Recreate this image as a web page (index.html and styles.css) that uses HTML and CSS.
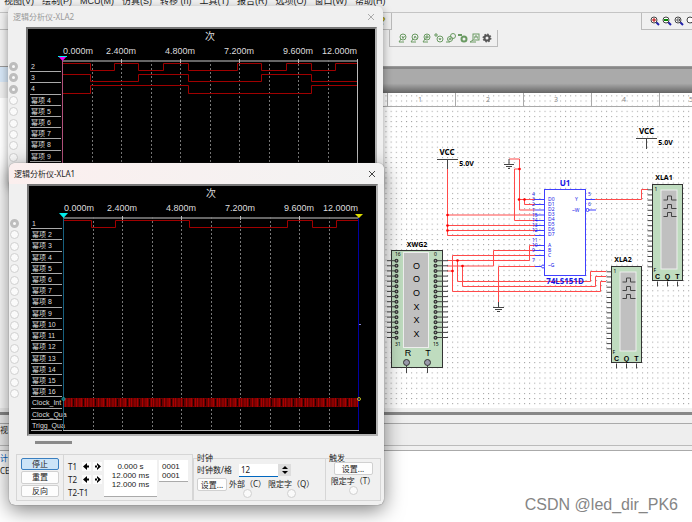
FILE: index.html
```html
<!DOCTYPE html>
<html lang="zh">
<head>
  <meta charset="UTF-8">
  <title>Multisim</title>
  <link rel="stylesheet" href="styles.css">
</head>
<body>
  <nav class="menubar">
    <a href="#">视图(V)</a>
    <a href="#">绘制(P)</a>
    <a href="#">MCU(M)</a>
    <a href="#">仿真(S)</a>
    <a href="#">转移 (n)</a>
    <a href="#">工具(T)</a>
    <a href="#">报告(R)</a>
    <a href="#">选项(O)</a>
    <a href="#">窗口(W)</a>
    <a href="#">帮助(H)</a>
  </nav>

  <div class="toolbars">
    <div class="toolbar-row">
      <div class="toolbar help-bar"><button class="tool help" aria-label="help">?</button></div>
      <div class="toolbar zoom-bar">
        <button class="tool" aria-label="zoom in"><svg width="10" height="10"><path d="M6 6L9 9" stroke="#22a" stroke-width="2"/><circle cx="4" cy="4" r="3" fill="#fff" stroke="#444"/><path d="M2 4H6M4 2V6" stroke="#b00"/></svg></button>
        <button class="tool" aria-label="zoom out"><svg width="10" height="10"><path d="M6 6L9 9" stroke="#22a" stroke-width="2"/><circle cx="4" cy="4" r="3" fill="#fff" stroke="#444"/><path d="M2 4H6" stroke="#080" stroke-width="2"/></svg></button>
        <button class="tool" aria-label="zoom area"><svg width="10" height="10"><path d="M6 6L9 9" stroke="#22a" stroke-width="2"/><circle cx="4" cy="4" r="3" fill="#fff" stroke="#444"/><path d="M3 3H5.500V5H3Z" fill="none" stroke="#555"/></svg></button>
        <button class="tool" aria-label="zoom sheet"><svg width="10" height="10"><path d="M6 6L9 9" stroke="#22a" stroke-width="2"/><circle cx="4" cy="4" r="3" fill="#fff" stroke="#444"/></svg></button>
      </div>
    </div>
    <div class="toolbar probe-bar">
      <button class="tool" aria-label="voltage"><svg width="10" height="10"><circle cx="5" cy="4" r="3" class="probe"/><path d="M1 9L3 6M1 9H6M4 3L5 5.500L6.500 3" class="probe"/></svg></button>
      <button class="tool" aria-label="current"><svg width="10" height="10"><circle cx="5" cy="4" r="3" class="probe"/><path d="M1 9L3 6M1 9H6M4 5.500L5 3L6.500 5.500" class="probe"/></svg></button>
      <button class="tool" aria-label="power"><svg width="10" height="10"><circle cx="5" cy="4" r="3" class="probe"/><path d="M1 9L3 6M1 9H6M4 6V3H6V5L4 4" class="probe"/></svg></button>
      <button class="tool" aria-label="differential"><svg width="10" height="10"><circle cx="6" cy="6" r="3" class="probe"/><path d="M0 2H4M2 0V4M5 5L6 7L7 5" class="probe"/></svg></button>
      <button class="tool" aria-label="voltage and current"><svg width="10" height="10"><circle cx="4" cy="6" r="2.500" class="probe"/><circle cx="7" cy="3" r="2.500" class="probe"/><path d="M0 9H4M3 7L4 5L5 7" class="probe"/></svg></button>
      <button class="tool" aria-label="reference"><svg width="10" height="10"><circle cx="6" cy="6" r="2.500" class="probe thick"/><path d="M0 2H4" class="probe thick"/></svg></button>
      <button class="tool" aria-label="digital"><svg width="10" height="10"><rect x="3" y="1" width="6" height="6" class="probe"/><path d="M0 9L3 7M0 9H6M4 5H5V3H7V5H8" class="probe"/></svg></button>
      <button class="tool" aria-label="settings"><svg width="10" height="10"><circle cx="5" cy="5" r="3.500" fill="none" stroke="#666" stroke-dasharray="1.600 1.100" stroke-width="2"/><circle cx="5" cy="5" r="2.500" fill="none" stroke="#555" stroke-width="2"/></svg></button>
    </div>
  </div>

  <div class="workspace">
    <aside class="sidebar"></aside>
    <main class="sheet">
      <div class="backdrop"></div>
      <svg class="schematic" width="100%" height="315">
        <defs>
          <pattern id="dots" x="503.500" y="403.200" width="5.130" height="5.130" patternUnits="userSpaceOnUse">
            <rect width="1" height="1" fill="#999"/>
          </pattern>
          <g id="analyzer">
            <path d="M0 5.300H-5M0 10.400H-5M0 15.600H-5M0 20.700H-5M0 25.800H-5M0 31H-5M0 36.100H-5M0 41.200H-5M0 46.300H-5M0 51.500H-5M0 56.600H-5M0 61.700H-5M0 66.900H-5M0 72H-5M0 77.100H-5M0 82.300H-5M5 97V102M15 97V102M25 97V102" class="lead"/>
            <rect x="0" y="0" width="30" height="96" class="chip"/>
            <rect x="8.500" y="5.500" width="16" height="79" class="screen"/>
            <path d="M11 15.500H15V11.500H19V15.500H24M11 24H15V20H19V24H24M11 32H15V28H19V32H24" class="lead"/>
            <text x="2" y="6" class="pin-no">1</text>
            <text x="1" y="87" class="pin-no">F</text>
            <text x="5" y="94" class="port">C</text>
            <text x="15" y="94" class="port">Q</text>
            <text x="25" y="94" class="port">T</text>
          </g>
        </defs>
        <g transform="translate(-8 -93)">
          <rect x="0" y="93" width="200%" height="315" fill="url(#dots)"/>

          <!-- ruler -->
          <path d="M0 106.500H2000M387.500 93V106M455.500 93V106M523.500 93V106M591.500 93V106M659.500 93V106" stroke="#aaa" fill="none"/>
          <g class="ruler">
            <text x="420" y="102">1</text><text x="488" y="102">2</text><text x="556" y="102">3</text><text x="624" y="102">4</text><text x="691" y="102">5</text>
          </g>

          <!-- wires -->
          <g class="wire">
            <path d="M447.500 169V235.500H535M447.500 215H535M447.500 225.500H535M447.500 230.500H535"/>
            <path d="M509 159H519.500V210H535M519.500 169H514.500V220.500H535M519.500 199.500H535M524.500 199.500V204.500H535"/>
            <path d="M595 199.500H641.500V189.500H648"/>
            <path d="M447 260.500H529.500V245.500H535M447 266H493.500V250.500H535M447 271H452.500V255.500H535"/>
            <path d="M452.500 271V291.500H600.500V281.500H606M457.500 260.500V281.500H590.500V271.500H606M462.500 266V286.500H595.500V276.500H606"/>
            <path d="M535 266.500H498.500V302"/>
          </g>
          <g fill="#f00">
            <circle cx="447.500" cy="215" r="1.300"/><circle cx="447.500" cy="225.500" r="1.300"/><circle cx="447.500" cy="230.500" r="1.300"/>
            <circle cx="519.500" cy="169" r="1.300"/><circle cx="519" cy="199.500" r="1.300"/><circle cx="524.500" cy="199.500" r="1.300"/>
            <circle cx="457.500" cy="260.500" r="1.300"/><circle cx="462.500" cy="266" r="1.300"/><circle cx="452.500" cy="271" r="1.300"/>
          </g>

          <!-- supplies and grounds -->
          <path class="lead" d="M437 159.500H458M447.500 159V169M636 138.500H657M646.500 138V149M509 159V164.500M504 164.500H514M506 166.500H512M508 168.500H510M498.500 302V307.500M493 307.500H504M495 309.500H502M497 311.500H500"/>
          <text x="447" y="155" class="name">VCC</text>
          <text x="466.500" y="166" class="volts">5.0V</text>
          <text x="646.500" y="134" class="name">VCC</text>
          <text x="665.500" y="145" class="volts">5.0V</text>

          <!-- multiplexer -->
          <g class="mux">
            <rect x="544.500" y="189.500" width="41" height="86" fill="#fff"/>
            <path d="M535 199.500H544M535 204.500H544M535 210H544M535 215H544M535 220.500H544M535 225.500H544M535 230.500H544M535 235.500H544M535 245.500H544M535 250.500H544M535 255.500H544M535 266.500H541M586 199.500H595M589 210H596"/>
            <circle cx="543" cy="266.500" r="1.500" fill="#fff"/><circle cx="587.500" cy="210" r="1.500" fill="#fff"/>
            <g class="pin-label">
              <text x="548" y="201">D0</text><text x="548" y="206">D1</text><text x="548" y="211">D2</text><text x="548" y="216">D3</text>
              <text x="548" y="221">D4</text><text x="548" y="226">D5</text><text x="548" y="231">D6</text><text x="548" y="236">D7</text>
              <text x="548" y="247">A</text><text x="548" y="252">B</text><text x="548" y="257">C</text><text x="548" y="267">~G</text>
              <text x="575" y="201">Y</text><text x="572" y="212">~W</text>
              <text x="532" y="196">4</text><text x="532" y="201">3</text><text x="532" y="206">2</text><text x="532" y="212">1</text>
              <text x="532" y="217">15</text><text x="532" y="222">14</text><text x="532" y="227">13</text><text x="532" y="232">12</text>
              <text x="532" y="242">11</text><text x="532" y="247">10</text><text x="532" y="252">9</text><text x="532" y="262">7</text>
              <text x="588" y="196">5</text><text x="588" y="206">6</text>
            </g>
            <text x="565" y="186" class="part">U1</text>
            <text x="565" y="284" class="part">74LS151D</text>
          </g>

          <!-- word generator -->
          <rect x="391.500" y="250.500" width="51" height="117" class="chip"/>
          <rect x="403.500" y="252.500" width="25" height="95" class="screen"/>
          <path d="M387 260.700H396M387 265.800H396M387 270.900H396M387 276.100H396M387 281.200H396M387 286.300H396M387 291.400H396M387 296.600H396M387 301.700H396M387 306.800H396M387 311.900H396M387 317.100H396M387 322.200H396M387 327.300H396M387 332.400H396M387 337.500H396M436 260.700H448M436 265.800H448M436 270.900H448M436 276.100H448M436 281.200H448M436 286.300H448M436 291.400H448M436 296.600H448M436 301.700H448M436 306.800H448M436 311.900H448M436 317.100H448M436 322.200H448M436 327.300H448M436 332.400H448M436 337.500H448M406.500 362V373M427.500 362V373" class="lead"/>
          <!-- round caps turn the zero-length dashes into terminals -->
          <path d="M396.500 260.700V338M435.500 260.700V338" class="terminals"/>
          <path d="M396.500 260.700V338M435.500 260.700V338" class="terminal-holes"/>
          <circle cx="406.500" cy="362.500" r="3" fill="#99a" stroke="#333"/><circle cx="427.500" cy="362.500" r="3" fill="#99a" stroke="#333"/>
          <text x="395" y="256" class="pin-no">16</text><text x="434" y="256" class="pin-no">0</text>
          <text x="395" y="346" class="pin-no">31</text><text x="433" y="346" class="pin-no">15</text>
          <g class="word">
            <text x="416.500" y="269">O</text><text x="416.500" y="282">O</text><text x="416.500" y="296">O</text>
            <text x="416.500" y="310">X</text><text x="416.500" y="323">X</text><text x="416.500" y="337">X</text>
            <text x="408" y="356">R</text><text x="428" y="356">T</text>
          </g>
          <text x="417" y="247" class="ref">XWG2</text>

          <use href="#analyzer" x="652.500" y="184.500"/>
          <text x="664" y="180" class="ref">XLA1</text>
          <use href="#analyzer" x="611.500" y="266.500"/>
          <text x="623" y="262" class="ref">XLA2</text>
        </g>
      </svg>
    </main>
  </div>

  <div class="tabs"><span>视</span></div>
  <footer class="output">
    <div class="log"><span class="link">计</span><span>CE</span></div>
    <p class="credit">CSDN @led_dir_PK6</p>
  </footer>

  <section class="window back">
    <header class="title"><h2>逻辑分析仪-XLA2</h2><button class="close" aria-label="close"><svg width="8" height="8"><path d="M1 1L7 7M7 1L1 7"/></svg></button></header>
    <div class="body">
      <div class="radios">
        <input type="radio" aria-label="2" checked><input type="radio" aria-label="3" checked><input type="radio" aria-label="4" checked>
        <input type="radio" aria-label="幂项 4"><input type="radio" aria-label="幂项 5"><input type="radio" aria-label="幂项 6">
        <input type="radio" aria-label="幂项 7"><input type="radio" aria-label="幂项 8"><input type="radio" aria-label="幂项 9">
      </div>
      <div class="scope">
        <ol class="channels">
          <li>2</li><li>3</li><li>4</li><li>幂项 4</li><li>幂项 5</li><li>幂项 6</li><li>幂项 7</li><li>幂项 8</li><li>幂项 9</li>
        </ol>
        <svg class="plot" width="314" height="248">
          <text x="149" y="11" class="plot-title">次</text>
          <g class="axis">
            <text x="2" y="25" class="first">0.000m</text><text x="60" y="25">2.400m</text><text x="119" y="25">4.800m</text>
            <text x="178" y="25">7.200m</text><text x="237" y="25">9.600m</text><text x="296" y="25" class="last">12.000m</text>
          </g>
          <path d="M1 32H297" class="bar"/>
          <path d="M31.500 31V244M60.500 31V244M90.500 31V244M119.500 31V244M149.500 31V244M178.500 31V244M208.500 31V244M237.500 31V244M267.500 31V244" class="grid"/>
          <path d="M60.500 30V34M119.500 30V34M178.500 30V34M237.500 30V34M296.500 30V244" class="tick"/>
          <path d="M2 34.500H29.500V41.500H53.500V34.500H77.500V41.500H102.500V34.500H127.500V41.500H176.500V34.500H200.500V41.500H225.500V34.500H250.500V41.500H274.500V34.500H296" class="trace"/>
          <path d="M2 45.500H29.500V52.500H77.500V45.500H127.500V52.500H200.500V45.500H250.500V52.500H296" class="trace"/>
          <path d="M2 64.500H29.500V56.500H127.500V64.500H250.500V56.500H296" class="trace"/>
          <path d="M1.500 32V244" stroke="#b0507a"/>
          <path d="M-3 27H6L1.500 32Z" fill="#e0e"/><path d="M-3 27.500H6" stroke="#0ee"/>
        </svg>
      </div>
    </div>
  </section>

  <section class="window front">
    <header class="title"><h2>逻辑分析仪-XLA1</h2><button class="close" aria-label="close"><svg width="8" height="8"><path d="M1 1L7 7M7 1L1 7"/></svg></button></header>
    <div class="body">
      <div class="radios">
        <input type="radio" aria-label="1" checked><input type="radio" aria-label="幂项 2"><input type="radio" aria-label="幂项 3"><input type="radio" aria-label="幂项 4">
        <input type="radio" aria-label="幂项 5"><input type="radio" aria-label="幂项 6"><input type="radio" aria-label="幂项 7"><input type="radio" aria-label="幂项 8">
        <input type="radio" aria-label="幂项 9"><input type="radio" aria-label="幂项 10"><input type="radio" aria-label="幂项 11"><input type="radio" aria-label="幂项 12">
        <input type="radio" aria-label="幂项 13"><input type="radio" aria-label="幂项 14"><input type="radio" aria-label="幂项 15"><input type="radio" aria-label="幂项 16">
      </div>
      <div class="scope">
        <ol class="channels">
          <li>1</li><li>幂项 2</li><li>幂项 3</li><li>幂项 4</li><li>幂项 5</li><li>幂项 6</li><li>幂项 7</li><li>幂项 8</li>
          <li>幂项 9</li><li>幂项 10</li><li>幂项 11</li><li>幂项 12</li><li>幂项 13</li><li>幂项 14</li><li>幂项 15</li><li>幂项 16</li>
          <li>Clock_Int</li><li>Clock_Qua</li><li>Trigg_Qua</li>
        </ol>
        <svg class="plot" width="314" height="248">
          <defs>
            <pattern id="clock" width="22" height="9" y="212" patternUnits="userSpaceOnUse">
              <rect width="22" height="9" fill="#6c0000"/>
              <path d="M1.500 0V9M3.500 0V9M7 0V9M9.500 0V9M14.500 0V9M18 0V9M19.500 0V9" stroke="#a80000"/>
              <path d="M11.500 1V8M21.500 1V8" stroke="#200000"/>
            </pattern>
          </defs>
          <text x="149" y="11" class="plot-title">次</text>
          <g class="axis">
            <text x="2" y="25" class="first">0.000m</text><text x="60" y="25">2.400m</text><text x="119" y="25">4.800m</text>
            <text x="178" y="25">7.200m</text><text x="237" y="25">9.600m</text><text x="296" y="25" class="last">12.000m</text>
          </g>
          <path d="M1 32H297" class="bar"/>
          <path d="M31.500 31V244M60.500 31V244M90.500 31V244M119.500 31V244M149.500 31V244M178.500 31V244M208.500 31V244M237.500 31V244M267.500 31V244" class="grid"/>
          <path d="M60.500 30V34M119.500 30V34M178.500 30V34M237.500 30V34M1 244.500H297" class="tick"/>
          <path d="M2 34.500H29.500V41.500H53.500V34.500H127.500V41.500H225.500V34.500H250.500V41.500H274.500V34.500H296" class="trace"/>
          <rect x="2" y="212" width="294" height="9" fill="url(#clock)"/>
          <path d="M1.500 32V244" stroke="#17607f"/>
          <path d="M296.500 32V244" stroke="#0000a0"/>
          <path d="M-3 27H6L1.500 32Z" fill="#0ee"/>
          <path d="M293 28H301L297 32Z" fill="#dd0"/>
          <circle cx="1.500" cy="213" r="1.500" fill="none" stroke="#1aa"/>
          <circle cx="297" cy="213" r="1.500" fill="none" stroke="#bb2"/>
          <path d="M297 138.500H299" stroke="#88c"/>
        </svg>
      </div>
    </div>
    <div class="scrollbar"></div>

    <div class="controls">
      <div class="group run">
        <button class="btn active">停止</button>
        <button class="btn">重置</button>
        <button class="btn">反向</button>
      </div>
      <div class="group cursors">
        <div class="steps">
          <div class="step"><span>T1</span><button aria-label="T1 left"><svg width="7" height="7"><path d="M0 3.500L4 0V7ZM3 2.500H6V4.500H3Z"/></svg></button><button aria-label="T1 right"><svg width="7" height="7"><path d="M7 3.500L3 0V7ZM1 2.500H4V4.500H1Z"/></svg></button></div>
          <div class="step"><span>T2</span><button aria-label="T2 left"><svg width="7" height="7"><path d="M0 3.500L4 0V7ZM3 2.500H6V4.500H3Z"/></svg></button><button aria-label="T2 right"><svg width="7" height="7"><path d="M7 3.500L3 0V7ZM1 2.500H4V4.500H1Z"/></svg></button></div>
          <div class="step"><span>T2-T1</span></div>
        </div>
        <div class="readout times">0.000 s<br>12.000 ms<br>12.000 ms</div>
        <div class="readout words">0001<br>0001</div>
      </div>
      <fieldset class="group clock">
        <legend>时钟</legend>
        <div class="rate">
          <label for="rate">时钟数/格</label>
          <input type="text" id="rate" value="12">
          <div class="spin"><button aria-label="up"><svg width="6" height="4"><path d="M0 4H6L3 1Z"/></svg></button><button aria-label="down"><svg width="6" height="4"><path d="M0 0H6L3 3Z"/></svg></button></div>
        </div>
        <div class="quals">
          <button class="btn">设置...</button>
          <label>外部（C）<input type="radio"></label>
          <label>限定字（Q）<input type="radio"></label>
        </div>
      </fieldset>
      <fieldset class="group trigger">
        <legend>触发</legend>
        <button class="btn">设置...</button>
        <label>限定字（T）<input type="radio"></label>
      </fieldset>
    </div>
  </section>
</body>
</html>
```

FILE: styles.css
```css
* {
  box-sizing: border-box;
}
body {
  margin: 0;
  height: 100vh;
  display: flex;
  flex-direction: column;
  overflow: hidden;
  background: #f0f0f0;
  color: #222;
  font-family: "Noto Sans", "Noto Sans CJK SC", sans-serif;
  font-size: 8px;
}
button {
  padding: 0;
  border: 0;
  background: none;
  font: inherit;
  color: inherit;
}

/* main frame */
.menubar {
  height: 13px;
  flex: none;
  display: flex;
  gap: 8px;
  padding-left: 4px;
  border-bottom: 1px solid #c4c4c4;
}
.menubar a {
  color: #222;
  text-decoration: none;
  font-family: "Liberation Sans", "Noto Sans CJK SC", sans-serif;
  font-size: 9px;
  line-height: 14px;
  margin-top: -6px;
  white-space: nowrap;
}
.toolbars {
  height: 54px;
  flex: none;
  border-bottom: 1px solid #999;
}
.toolbar-row {
  display: flex;
  justify-content: space-between;
}
.toolbar {
  display: flex;
  align-items: center;
  height: 17px;
  border: 0 solid #bbb;
}
.tool {
  width: 12px;
  height: 12px;
  display: flex;
  align-items: center;
  justify-content: center;
}
.help-bar {
  width: 392px;
  justify-content: flex-end;
  padding-right: 2px;
  border-width: 0 1px 1px 0;
}
.help {
  color: #a90;
  font-weight: bold;
  font-size: 10px;
}
.zoom-bar {
  width: 51px;
  padding-left: 7px;
  border-width: 0 0 1px 1px;
}
.zoom-bar .tool {
  flex: none;
}
.probe-bar {
  width: 109px;
  margin-left: 389px;
  padding-left: 7px;
  border-width: 0 1px 1px;
}
.probe {
  fill: none;
  stroke: #6a9a62;
}
.thick {
  stroke-width: 2;
}
.workspace {
  flex: none;
  display: flex;
}
.sidebar {
  width: 8px;
  background: linear-gradient(#d5e5f5 15px, #eee 15px, #eee 31px, #fff 31px);
}
.sheet {
  flex: 1;
  min-width: 0;
  background: #fff;
}
.backdrop {
  height: 26px;
  border-top: 2px solid #888;
  background: linear-gradient(#aaa 60%, #666);
}
.schematic {
  display: block;
}
.tabs {
  height: 38px;
  flex: none;
  margin-top: 4px;
  border-top: 3px solid #888;
  background: linear-gradient(#f0f0f0 8px, #aaa 8px, #aaa 9px, #eee 9px, #eee 30px, #bbb 30px, #bbb 31px, #f0f0f0 31px);
  padding-top: 9px;
}
.output {
  flex: 1;
  display: flex;
  justify-content: space-between;
  align-items: flex-end;
  padding-right: 14px;
  background: #fff;
  border-top: 1px solid #aaa;
}
.log {
  align-self: flex-start;
  display: flex;
  flex-direction: column;
  line-height: 13px;
}
.link {
  color: #0060c0;
}
.credit {
  margin: 0 0 7px;
  color: #858585;
  font-family: "Liberation Sans", sans-serif;
  font-size: 16px;
  line-height: 20px;
}

/* schematic */
.ruler {
  fill: #888;
  font-size: 7px;
  text-anchor: middle;
}
.wire {
  fill: none;
  stroke: #ff4a4a;
}
.lead {
  fill: none;
  stroke: #444;
}
.chip {
  fill: #bfdcbf;
  stroke: #333;
}
.screen {
  fill: #c0c0c0;
  stroke: #eee;
}
.terminals {
  stroke: #333;
  stroke-width: 4;
  stroke-linecap: round;
  stroke-dasharray: 0 5.130;
}
.terminal-holes {
  stroke: #aaa;
  stroke-width: 1.500;
  stroke-linecap: round;
  stroke-dasharray: 0 5.130;
}
.name,
.volts,
.part,
.ref,
.port,
.word {
  text-anchor: middle;
  font-weight: bold;
  font-size: 8px;
}
.volts,
.ref {
  font-size: 7px;
}
.word {
  font-weight: normal;
  font-size: 9px;
  font-family: "Liberation Sans", sans-serif;
}
.port {
  font-size: 7px;
  font-family: "Liberation Sans", sans-serif;
}
.pin-no {
  font-size: 5px;
}
.mux {
  fill: none;
  stroke: #4040ff;
}
.mux text {
  fill: #1414e6;
  stroke: none;
}
.pin-label {
  font-size: 5px;
}

/* instrument windows */
.window {
  position: absolute;
  width: 375px;
  background: #f0f0f0;
  border-radius: 6px;
  overflow: hidden;
}
.back {
  left: 8px;
  top: 6px;
  height: 180px;
  box-shadow: 0 3px 10px rgba(0, 0, 0, .4);
}
.front {
  left: 9px;
  top: 163px;
  box-shadow: 0 5px 20px rgba(0, 0, 0, .5), 0 0 1px #555;
}
.title {
  height: 21px;
  display: flex;
  align-items: center;
  justify-content: space-between;
  padding: 0 8px 0 5px;
}
.front .title {
  background: linear-gradient(90deg, #fbefee, #f3f3f3);
}
.title h2 {
  margin: 0;
  font-size: 8px;
  font-weight: normal;
}
.back h2 {
  color: #999;
}
.close {
  height: 8px;
}
.close svg {
  display: block;
  fill: none;
  stroke: #444;
}
.back .close svg {
  stroke: #aaa;
}
.body {
  display: flex;
}
.radios {
  width: 18px;
  height: 181px;
  margin-top: 34px;
  display: grid;
  grid-template-rows: repeat(16, 1fr);
  align-items: center;
}
input[type="radio"] {
  appearance: none;
  width: 9px;
  height: 9px;
  margin: 0 1px;
  border: 1px solid #d0d0d0;
  border-radius: 50%;
  background: #fafafa;
}
input[type="radio"]:checked {
  border: 3px solid #bdbdbd;
}
.scope {
  width: 351px;
  height: 252px;
  display: flex;
  border: 2px solid;
  border-color: #777 #b4b4b4 #b4b4b4 #777;
  background: #000;
  color: #ddd;
}
.channels {
  list-style: none;
  flex: none;
  width: 33px;
  height: 213px;
  margin: 32px 0 0;
  padding: 0 0 0 2px;
  display: grid;
  grid-template-columns: minmax(0, 1fr);
  grid-template-rows: repeat(19, 1fr);
  font-family: "Liberation Sans", "Noto Sans CJK SC", sans-serif;
  font-size: 7px;
  line-height: 11px;
  white-space: nowrap;
}
.channels li {
  min-height: 0;
  padding-left: 1px;
  border-bottom: 1px solid #aaa;
}
.plot {
  flex: none;
  overflow: visible;
  fill: none;
}
.plot text {
  fill: #ddd;
}
.plot-title {
  font-size: 10px;
  text-anchor: middle;
}
.axis {
  font-family: "Liberation Sans", sans-serif;
  font-size: 9px;
  text-anchor: middle;
}
.first {
  text-anchor: start;
}
.last {
  text-anchor: end;
}
.bar {
  stroke: #666;
  stroke-width: 2;
}
.grid {
  stroke: #777;
  stroke-dasharray: 2 2;
}
.tick {
  stroke: #bbb;
}
.trace {
  stroke: #a00000;
}
.scrollbar {
  width: 37px;
  height: 3px;
  margin: 5px 0 0 26px;
  background: #8a8a8a;
}

/* control panel */
.controls {
  display: flex;
  height: 47px;
  margin: 10px 3px 4px 7px;
  line-height: 12px;
}
.group {
  min-width: 0;
  margin: 0;
  border: 1px solid #d6d6d6;
}
.btn {
  height: 13px;
  border: 1px solid #d0d0d0;
  border-radius: 2px;
  background: #fdfdfd;
  line-height: 10px;
}
.btn.active {
  border-color: #3a7fc0;
  background: #cce4f7;
}
.run {
  width: 48px;
  padding: 3px 4px;
  display: flex;
  flex-direction: column;
  gap: 1px;
}
.cursors {
  width: 129px;
  display: flex;
  gap: 2px;
  padding: 5px 4px;
  border-left: 0;
}
.steps {
  width: 34px;
  white-space: nowrap;
}
.step {
  display: flex;
  gap: 2px;
  align-items: center;
  height: 13px;
}
.step span {
  flex: 1;
}
.step button {
  width: 9px;
  height: 9px;
  display: flex;
  align-items: center;
  justify-content: center;
  background: #fcfcfc;
}
.readout {
  line-height: 9px;
  padding-top: 2px;
  background: #fff;
  border-bottom: 1px solid #aaa;
  font-family: "Liberation Sans", sans-serif;
}
.times {
  width: 53px;
  height: 37px;
  text-align: center;
}
.words {
  width: 29px;
  height: 22px;
  padding-left: 3px;
}
fieldset {
  padding: 0 3px;
}
legend {
  height: 8px;
  padding: 0;
  line-height: 8px;
}
.clock {
  width: 133px;
}
.rate {
  display: flex;
  align-items: center;
  height: 16px;
}
.rate label {
  width: 42px;
}
.rate input {
  width: 39px;
  height: 13px;
  padding: 0 2px;
  border: 0;
  border-bottom: 1px solid #0067c0;
  background: #fff;
  font: inherit;
  color: inherit;
}
.spin {
  display: flex;
  flex-direction: column;
  width: 13px;
  background: #ddd;
}
.spin button {
  height: 6px;
  display: flex;
  align-items: center;
  justify-content: center;
}
.quals {
  display: flex;
  gap: 2px;
}
.quals .btn {
  width: 30px;
  flex: none;
}
.quals label,
.trigger label {
  display: flex;
  flex-direction: column;
  align-items: center;
  line-height: 11px;
  white-space: nowrap;
}
.trigger {
  flex: 1;
  border-left: 0;
}
.trigger .btn {
  display: block;
  width: 39px;
  margin: 0 auto;
}
```
